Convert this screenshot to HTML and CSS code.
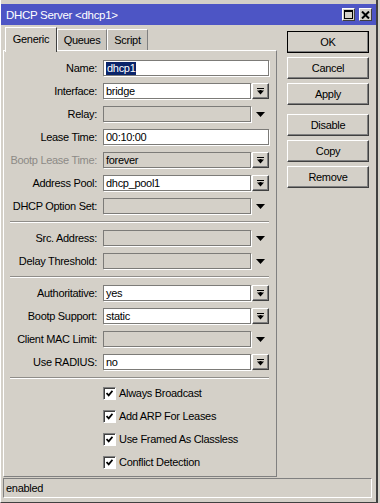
FILE: index.html
```html
<!doctype html>
<html lang="en">
  <head>
    <meta charset="UTF-8" />
    <title>DHCP Server &lt;dhcp1&gt;</title>
    <link rel="stylesheet" href="styles.css">
  </head>
  <body>
    <div class="window">
      <div class="titlebar">
        <span class="title">DHCP Server &lt;dhcp1&gt;</span>
        <div class="title-btns">
          <span class="tbtn">
            <svg width="9" height="9" viewBox="0 0 9 9"><rect x="0.5" y="0.5" width="8" height="8" fill="none" stroke="#000"/><rect x="0" y="0" width="9" height="2" fill="#000"/></svg>
          </span>
          <span class="tbtn">
            <svg width="9" height="8" viewBox="0 0 9 8"><path d="M1 0.5 L8 7.5 M8 0.5 L1 7.5" stroke="#000" stroke-width="2"/></svg>
          </span>
        </div>
      </div>

      <div class="content">
        <div class="left">
          <div class="tabs">
            <div class="tab active generic">Generic</div>
            <div class="tab queues">Queues</div>
            <div class="tab script">Script</div>
          </div>

          <div class="panel">
            <div class="form">
              <label class="lbl">Name:</label>
              <div class="field"><div class="input"><span class="sel">dhcp1</span></div></div>

              <label class="lbl">Interface:</label>
              <div class="field"><div class="input">bridge</div><span class="pick"></span></div>

              <label class="lbl">Relay:</label>
              <div class="field"><div class="input off"></div><span class="arrow"></span></div>

              <label class="lbl">Lease Time:</label>
              <div class="field"><div class="input">00:10:00</div></div>

              <label class="lbl dim">Bootp Lease Time:</label>
              <div class="field"><div class="input off">forever</div><span class="pick"></span></div>

              <label class="lbl">Address Pool:</label>
              <div class="field"><div class="input">dhcp_pool1</div><span class="pick"></span></div>

              <label class="lbl">DHCP Option Set:</label>
              <div class="field"><div class="input off"></div><span class="arrow"></span></div>

              <div class="sep"></div>

              <label class="lbl">Src. Address:</label>
              <div class="field"><div class="input off"></div><span class="arrow"></span></div>

              <label class="lbl">Delay Threshold:</label>
              <div class="field"><div class="input off"></div><span class="arrow"></span></div>

              <div class="sep"></div>

              <label class="lbl">Authoritative:</label>
              <div class="field"><div class="input">yes</div><span class="pick"></span></div>

              <label class="lbl">Bootp Support:</label>
              <div class="field"><div class="input">static</div><span class="pick"></span></div>

              <label class="lbl">Client MAC Limit:</label>
              <div class="field"><div class="input off"></div><span class="arrow"></span></div>

              <label class="lbl">Use RADIUS:</label>
              <div class="field"><div class="input">no</div><span class="pick"></span></div>

              <div class="sep"></div>

              <div class="check"><span class="box"></span>Always Broadcast</div>
              <div class="check"><span class="box"></span>Add ARP For Leases</div>
              <div class="check"><span class="box"></span>Use Framed As Classless</div>
              <div class="check"><span class="box"></span>Conflict Detection</div>
            </div>
          </div>
        </div>

        <div class="actions">
          <button class="btn default">OK</button>
          <button class="btn">Cancel</button>
          <button class="btn">Apply</button>
          <button class="btn group">Disable</button>
          <button class="btn">Copy</button>
          <button class="btn">Remove</button>
        </div>
      </div>

      <div class="statusbar">enabled</div>
    </div>
  </body>
</html>
```

FILE: styles.css
```css
* {
  margin: 0;
  padding: 0;
  box-sizing: border-box;
}

html,
body {
  background: #d4d0c8;
}

body {
  font-family: "Liberation Sans", Arial, sans-serif;
  font-size: 11px;
  letter-spacing: -0.3px;
  color: #000;
}

.window {
  width: 378px;
  height: 503px;
  padding: 4px 0 3px 0;
  border-left: 1px solid #fff;
  border-right: 2px solid #404040;
  border-bottom: 1px solid #404040;
}

.titlebar {
  height: 21px;
  background: #4d55c5;
  color: #fff;
  display: flex;
  align-items: center;
  padding: 0 4px 0 5px;
  font-size: 11.5px;
}

.title-btns {
  margin-left: auto;
  display: flex;
  gap: 4px;
}

.tbtn {
  width: 13px;
  height: 13px;
  background: #d4d0c8;
  border: 1px solid #404040;
  border-top-color: #fff;
  border-left-color: #fff;
  display: flex;
  align-items: center;
  justify-content: center;
}

.content {
  display: flex;
  padding-left: 2px;
}

.left {
  width: 274px;
}

.tabs {
  height: 25px;
  display: flex;
  align-items: flex-end;
  padding-left: 2px;
}

.tab {
  height: 21px;
  text-align: center;
  line-height: 20px;
  background: #cac6be;
  border-top: 1px solid #fff;
  border-left: 1px solid #fff;
  border-right: 1px solid #808080;
}

.tab.generic {
  width: 52px;
}

.tab.queues {
  width: 50px;
}

.tab.script {
  width: 41px;
}

.tab.active {
  height: 25px;
  line-height: 23px;
  background: #d4d0c8;
  margin-bottom: -2px;
  position: relative;
  z-index: 1;
  border-right: 1px solid #404040;
}

.panel {
  height: 427px;
  border-top: 1px solid #fff;
  border-left: 1px solid #fff;
  border-right: 1px solid #808080;
  border-bottom: 1px solid #808080;
}

.form {
  display: grid;
  grid-template-columns: 93px 166px;
  column-gap: 6px;
  row-gap: 7px;
  padding-top: 9px;
}

.lbl {
  text-align: right;
  line-height: 16px;
  white-space: nowrap;
}

.lbl.dim {
  color: #8c8a86;
}

.field {
  display: flex;
  gap: 1px;
  height: 16px;
}

.input {
  flex: 1;
  height: 16px;
  background: #fff;
  border: 1px solid #7c7b78;
  box-shadow: 1px 1px 0 #fff;
  padding-left: 2px;
  line-height: 14px;
  white-space: nowrap;
  overflow: hidden;
}

.input.off {
  background: #d4d0c8;
}

.sel {
  display: inline-block;
  background: #0a246a;
  color: #fff;
  padding: 0 1px;
  line-height: 13px;
}

.pick {
  width: 17px;
  height: 16px;
  border: 1px solid #404040;
  border-top-color: #fff;
  border-left-color: #fff;
  box-shadow: inset -1px -1px 0 #808080;
  background: #d4d0c8
    url("data:image/svg+xml,%3Csvg xmlns='http://www.w3.org/2000/svg' width='7' height='7'%3E%3Crect width='7' height='1' fill='%23000'/%3E%3Cpath d='M0 2.5 H7 L3.5 6.5 Z' fill='%23000'/%3E%3Crect x='2.5' y='2' width='2' height='2' fill='%23000'/%3E%3C/svg%3E")
    no-repeat center;
}

.arrow {
  width: 17px;
  height: 16px;
  background: url("data:image/svg+xml,%3Csvg xmlns='http://www.w3.org/2000/svg' width='9' height='5'%3E%3Cpath d='M0 0 H9 L4.5 5 Z' fill='%23000'/%3E%3C/svg%3E")
    no-repeat center;
}

.sep {
  grid-column: 1 / -1;
  margin-left: 6px;
  height: 2px;
  border-top: 1px solid #8f8d89;
  border-bottom: 1px solid #fff;
}

.check {
  grid-column: 2;
  display: flex;
  align-items: center;
  gap: 3px;
  height: 16px;
  margin-top: -1px;
  margin-bottom: 1px;
  white-space: nowrap;
}

.box {
  width: 13px;
  height: 13px;
  background: #fff
    url("data:image/svg+xml,%3Csvg xmlns='http://www.w3.org/2000/svg' width='7' height='7'%3E%3Cpath d='M0.5 3 L2.7 5.4 L6.5 0.8' fill='none' stroke='%23000' stroke-width='1.8'/%3E%3C/svg%3E")
    no-repeat center;
  border: 1px solid #808080;
  border-right-color: #fff;
  border-bottom-color: #fff;
  box-shadow: inset 1px 1px 0 #404040;
}

.actions {
  width: 82px;
  margin-left: 10px;
  padding-top: 6px;
  display: flex;
  flex-direction: column;
  gap: 4px;
}

.btn {
  height: 22px;
  font-family: inherit;
  font-size: 11px;
  letter-spacing: -0.3px;
  color: #000;
  background: #d4d0c8;
  border: 1px solid #404040;
  border-top-color: #fff;
  border-left-color: #fff;
  box-shadow: inset -1px -1px 0 #808080;
}

.btn.default {
  outline: 1px solid #000;
  outline-offset: -1px;
}

.btn.group {
  margin-top: 5px;
}

.statusbar {
  height: 20px;
  margin: 1px 4px 0 2px;
  border: 1px solid #808080;
  border-right-color: #fff;
  border-bottom-color: #fff;
  line-height: 18px;
  padding-left: 2px;
}
```
